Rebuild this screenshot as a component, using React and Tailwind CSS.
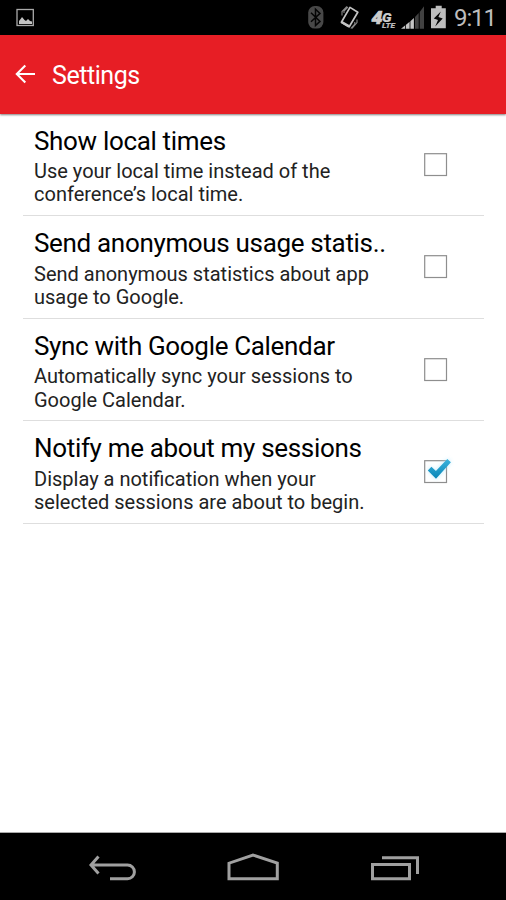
const settings = [
  { title: 'Show local times', lines: ['Use your local time instead of the', 'conference’s local time.'] },
  { title: 'Send anonymous usage statis..', lines: ['Send anonymous statistics about app', 'usage to Google.'] },
  { title: 'Sync with Google Calendar', lines: ['Automatically sync your sessions to', 'Google Calendar.'] },
  { title: 'Notify me about my sessions', lines: ['Display a notification when your', 'selected sessions are about to begin.'], checked: true },
];

function StatusBar() {
  return (
    <div className="flex h-[35px] shrink-0 items-start bg-black">
      <svg width="506" height="35" viewBox="0 0 506 35" fill="none">
        <rect x="17" y="9.5" width="16.3" height="16" stroke="#aaa" strokeWidth="1.3" />
        <path d="M19 24V21l2-2.5 1-1.5 2.5 3 1.5 1 2-2 2 2 2 .5V24z" fill="#c4c4c4" />
        <rect x="308.2" y="6" width="15.2" height="22.6" rx="6.5" fill="#484848" />
        <path d="M311 12.8l9 8.6-4.5 4.2V9.2l4.5 4.2-9 8.4" stroke="#050505" strokeWidth="1.5" />
        <path d="M350 7.4l7.8 4.8-8.6 14.6-7.8-4.6z" stroke="#c4c4c4" strokeWidth="1.7" strokeLinejoin="round" />
        <path d="M341.6 22l7.4 4.4" stroke="#c4c4c4" strokeWidth="2.6" />
        <path d="M342 15.5v-4l5-5M344 13v-2l4-4M357 19.5v3l-5 6M354.8 22v2l-4 4.5" stroke="#888" strokeWidth="1.1" />
        <path d="M401 28.8l4-3.3v3.3z M405.8 28.8V25l3.8-3.2v7z M410.4 28.8v-7.5l3.5-3.3v10.8z" fill="#c4c4c4" />
        <path d="M415 28.8V17l3.7-4v15.8z M419.7 28.8V12l4.3-5.8v22.6z" fill="#414141" />
        <path d="M435.7 5.8h6v2.4h4.1v20H431V8.2h4.7z" fill="#bdbdbd" />
        <path d="M440.8 11.5l-7 7 4.2 1.5-2.8 6.5 7.5-8-4.3-1.4z" fill="#050505" />
        <text x="371.5" y="24" fill="#ccc" stroke="#ccc" strokeWidth=".7" fontFamily="Roboto, sans-serif" fontWeight="900" fontStyle="italic" fontSize="18" textLength="11" lengthAdjust="spacingAndGlyphs">4</text>
        <text x="382" y="22.3" fill="#ccc" stroke="#ccc" strokeWidth=".2" fontFamily="Roboto, sans-serif" fontWeight="900" fontStyle="italic" fontSize="13" textLength="9.5" lengthAdjust="spacingAndGlyphs">G</text>
        <text x="382" y="28.4" fill="#bbb" stroke="#bbb" strokeWidth=".2" fontFamily="Roboto, sans-serif" fontWeight="800" fontStyle="italic" fontSize="7.2" textLength="13" lengthAdjust="spacingAndGlyphs">LTE</text>
        <text x="454" y="26.3" fill="#bdbdbd" fontFamily="Roboto, sans-serif" fontSize="24" textLength="43">9:11</text>
      </svg>
    </div>
  );
}

function Checkbox({ checked }) {
  return (
    <svg width="36" height="36" viewBox="0 0 36 36" fill="none" className="shrink-0">
      <defs>
        <linearGradient id="tick" x1="0" y1="0" x2="0" y2="1">
          <stop offset="0" stopColor="#3db3dc" />
          <stop offset="1" stopColor="#0785b7" />
        </linearGradient>
        <filter id="glow" x="-40%" y="-40%" width="180%" height="180%">
          <feGaussianBlur stdDeviation="2" />
        </filter>
      </defs>
      <rect x="6.7" y="7.7" width="21.8" height="21.8" stroke="#8e8e8e" strokeWidth="1.2" />
      {checked && (
        <>
          <path d="M10 17l3-3 4.5 4.5L29.5 6l3.3 3L18 26z" fill="#a7e4fb" opacity=".75" filter="url(#glow)" />
          <path d="M9.8 17.6l3.6-3.8 4.5 4.2L29.3 6l3.6 3.3L18 25.8z" fill="url(#tick)" />
        </>
      )}
    </svg>
  );
}

function Setting({ title, lines, checked }) {
  return (
    <div className="flex h-[102.67px] border-b-[1.5px] border-[#dedede] pl-[11px]">
      <div className="w-[384px] shrink-0 whitespace-nowrap pt-[11px]">
        <div className="text-[26px] leading-[32px] tracking-[-0.33px] text-black">{title}</div>
        <div className="mt-[3.4px] text-[20px] leading-[23.3px] text-[#222]">
          {lines.map((line) => <div key={line}>{line}</div>)}
        </div>
      </div>
      <div className="pt-[32px]"><Checkbox checked={checked} /></div>
    </div>
  );
}

export default function App() {
  return (
    <div className="flex h-[900px] w-[506px] flex-col overflow-hidden bg-white font-['Roboto',sans-serif]">
      <StatusBar />
      <header className="flex h-[78.5px] shrink-0 items-center bg-[#e71e25] pl-[15px] text-white shadow-[0_1px_2px_rgba(0,0,0,0.5)]">
        <svg width="21" height="20" viewBox="0 0 21 20" fill="none" stroke="white" strokeWidth="2.1">
          <path d="M20 10H2M10.3 1.5L1.8 10l8.5 8.5" />
        </svg>
        <h1 className="ml-[16px] pt-[4px] text-[25px] leading-[30px] tracking-[-0.45px]">Settings</h1>
      </header>
      <main className="flex-1 pl-[23px] pr-[22.5px]">
        {settings.map((s) => <Setting key={s.title} {...s} />)}
      </main>
      <nav className="h-[68px] shrink-0 border-t border-[#aaa] bg-black">
        <svg width="506" height="67" viewBox="0 833 506 67" fill="none" stroke="#a0a0a0" strokeWidth="3">
          <path d="M98.5 856.5L91 865l7.5 8.5M91 865h36.5a6.8 6.8 0 0 1 0 13.8H110" />
          <path d="M229 878.7v-15.5l24-8.2 24.3 8.2v15.5z" />
          <path d="M372.5 864.5h37v14.3h-37zM382 857.8h35.5V874" />
        </svg>
      </nav>
    </div>
  );
}
